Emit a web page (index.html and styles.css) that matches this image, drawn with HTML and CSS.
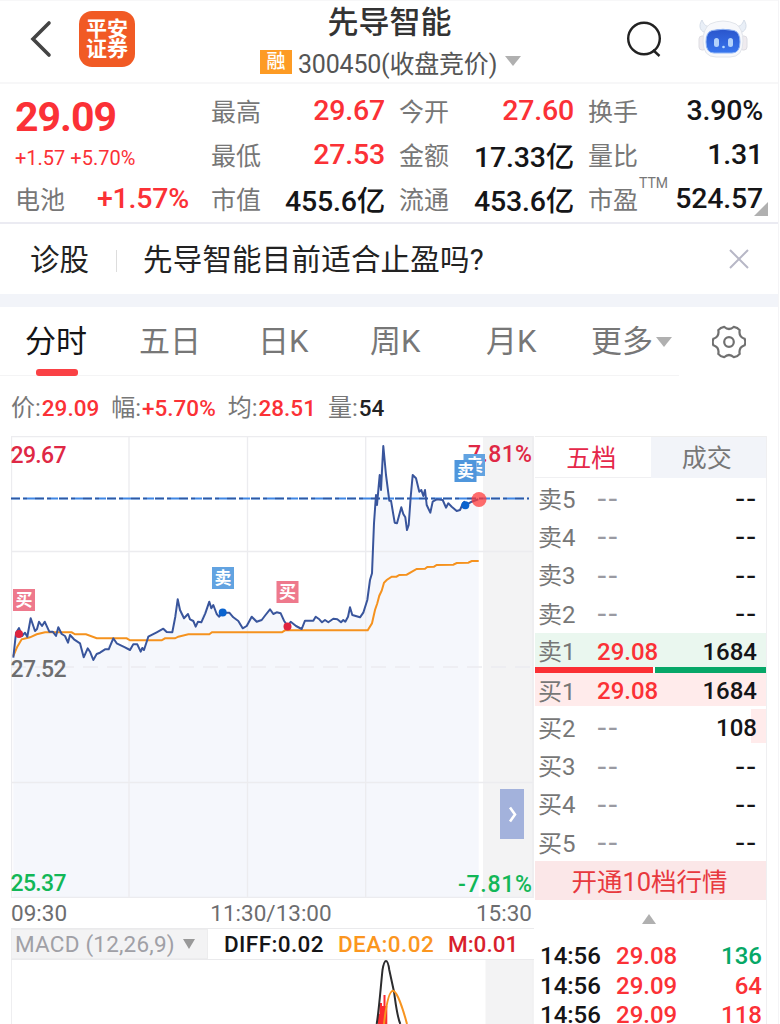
FILE: index.html
```html
<!DOCTYPE html>
<html lang="zh-CN">
<head>
    <meta charset="UTF-8">
    <meta name="viewport" content="width=device-width, initial-scale=1.0">
    <title>先导智能 300450</title>
    <link rel="stylesheet" href="styles.css">
</head>
<body>
    <div id="wrapper">
        <header class="header">
            <svg class="back" viewBox="0 0 22 38" width="22" height="38"><path d="M19 3 L3 19 L19 35"/></svg>
            <div class="logo"><span>平安</span><span>证券</span></div>
            <div class="stock">
                <h1>先导智能</h1>
                <div class="stock-code">
                    <span class="tag">融</span>
                    <span class="code">300450(收盘竞价)</span>
                    <span class="arrow-down"></span>
                </div>
            </div>
            <svg class="search" viewBox="0 0 38 38" width="38" height="38"><circle cx="18" cy="17.500" r="15.800"/><path d="M27 29 L33.500 35"/></svg>
            <svg class="robot" viewBox="0 0 50 42" width="50" height="42">
                <defs>
                    <linearGradient id="face" x1="0" y1="0" x2="0" y2="1">
                        <stop offset="0" stop-color="#2a55cc"/>
                        <stop offset="1" stop-color="#3876ee"/>
                    </linearGradient>
                </defs>
                <path d="M4 2 C0 8 2 14 9 15 L13 8 C8 9 6 7 4 2Z M46 2 C50 8 48 14 41 15 L37 8 C42 9 44 7 46 2Z" fill="#e9eff7" stroke="#d5dde8"/>
                <rect x="1" y="18" width="7" height="14" rx="3" fill="#efebef" stroke="#dddde2"/>
                <rect x="42" y="18" width="7" height="14" rx="3" fill="#efebef" stroke="#dddde2"/>
                <path d="M12 6 Q25 0 38 6 Q45 11 45 23 Q45 39 32 39 H18 Q5 39 5 23 Q5 11 12 6Z" fill="#f7f8fb" stroke="#e2e5eb"/>
                <path d="M14 12.500 Q25 10 36 12.500 Q42 14 42 24 Q42 35 34 35 H16 Q8 35 8 24 Q8 14 14 12.500Z" fill="url(#face)" stroke="#8fb4f5"/>
                <rect x="16" y="20" width="5" height="9" rx="2.500" fill="#b3d2fb"/>
                <rect x="30" y="20" width="5" height="9" rx="2.500" fill="#b3d2fb"/>
                <circle cx="25.500" cy="29" r="1.300" fill="#b8dcff"/>
            </svg>
        </header>

        <section class="quote">
            <div class="quote-main">
                <div class="price">29.09</div>
                <div class="change">+1.57 +5.70%</div>
                <div class="pair"><span>电池</span><b class="red">+1.57%</b></div>
            </div>
            <div class="quote-col">
                <div class="pair"><span>最高</span><b class="red">29.67</b></div>
                <div class="pair"><span>最低</span><b class="red">27.53</b></div>
                <div class="pair"><span>市值</span><b>455.6亿</b></div>
            </div>
            <div class="quote-col">
                <div class="pair"><span>今开</span><b class="red">27.60</b></div>
                <div class="pair"><span>金额</span><b>17.33亿</b></div>
                <div class="pair"><span>流通</span><b>453.6亿</b></div>
            </div>
            <div class="quote-col">
                <div class="pair"><span>换手</span><b>3.90%</b></div>
                <div class="pair"><span>量比</span><b>1.31</b></div>
                <div class="pair"><span>市盈<sup>TTM</sup></span><b>524.57</b></div>
            </div>
            <i class="corner"></i>
        </section>

        <section class="diagnose">
            <span class="diagnose-name">诊股</span>
            <span class="diagnose-text">先导智能目前适合止盈吗?</span>
            <svg viewBox="0 0 20 20" width="20" height="20"><path d="M1 1 L19 19 M19 1 L1 19"/></svg>
        </section>

        <nav class="tabs">
            <span class="tab active">分时</span>
            <span class="tab">五日</span>
            <span class="tab">日K</span>
            <span class="tab">周K</span>
            <span class="tab">月K</span>
            <span class="tab more">更多<i class="arrow-down"></i></span>
            <svg class="gear" viewBox="0 0 34 34" width="34" height="34">
                <path d="M32.600 13.700 Q34 17 32.600 20.300 Q26.400 22.400 27.700 28.900 Q25.500 31.800 21.900 32.200 Q17 27.800 12.100 32.200 Q8.500 31.800 6.300 28.900 Q7.600 22.400 1.400 20.300 Q0 17 1.400 13.700 Q7.600 11.600 6.300 5.100 Q8.500 2.200 12.100 1.800 Q17 6.200 21.900 1.800 Q25.500 2.200 27.700 5.100 Q26.400 11.600 32.600 13.700Z"/>
                <circle cx="17" cy="17" r="4.800"/>
            </svg>
        </nav>

        <div class="info">
            <span>价:<b class="red">29.09</b></span>
            <span>幅:<b class="red">+5.70%</b></span>
            <span>均:<b class="red">28.51</b></span>
            <span>量:<b>54</b></span>
        </div>

        <main class="content">
            <div class="charts">
                <svg class="chart" viewBox="11 436 523 462" width="523" height="462">
                    <rect x="483" y="436" width="51" height="462" fill="#f3f3f4"/>
                    <path class="area" d="M13.300 898 V657.700 L16 633 19 628 22 636 25 632.700 27.300 636.700 30.700 618.300 35 631 37 629 39 621.700 42 626 44.700 621.700 49.300 631.700 56 636 58.300 627.300 61.700 634 68 642.700 70 635 80 643.300 83.700 657.300 87.700 648.300 93.300 660 105 649.300 113.300 638.300 116.700 643.300 130 650 137.300 644.300 140.700 651.700 148.300 636.700 163.300 628.700 172.300 632.300 177.700 599.300 184 618.300 195.700 626.700 209.300 601.700 219 616.700 229.300 612.700 242.700 628.300 251.700 616.700 261.700 620 270 609.300 280.700 613.300 287.700 626 301.700 629 305 620.700 345.300 621.700 350 607.300 352.300 615 360 617.300 367.300 600 372 573.300 376 495 383.300 446 389.300 500.700 397 523.300 401.300 507.300 407 530 412.700 475 419.300 491.700 430.300 512.700 436.700 499.300 456.700 511 478.700 499 V898Z"/>
                    <path class="grid" d="M11 436.700 H533 M11 551.500 H533 M11 782.500 H533 M11 897.300 H533 M11.500 436 V898 M129 436 V898 M247.500 436 V898 M365.700 436 V898 M533 436 V898"/>
                    <path class="grid dash" d="M11 667 H533"/>
                    <path class="now" d="M11 498.500 H529"/>
                    <path class="now-dash" d="M11 498.500 H529"/>
                    <polyline class="avg" points="13.3,656 17.3,646.7 21.7,639.3 30,637.3 36.7,634.3 45,632.3 71.7,632.3 75,634.3 86,634.3 96.7,638.3 126.700,638.3 130,640.3 161.7,640.3 165,638.3 175,638.3 178.3,636.700 188.300,634.3 209.3,634.3 212,632.3 282,632.3 285,630.3 367.7,630.3 372,623.3 375,610 377.3,603.3 379.3,595.7 381.7,590.7 384,582.7 386.7,580 391.7,576.7 396.5,576.7 399.3,575 406.7,574.7 416.7,569 425,568.7 427.3,567 434,566.7 436.7,565 453.3,564.7 456.7,563 468.3,562.7 471.7,561 478.7,561"/>
                    <polyline class="line" points="13.3,657.7 16,633 19,628 22,636 25,632.7 27.3,636.7 30.7,618.3 35,631 37,629 39,621.7 42,626 44.7,621.7 49.3,631.7 52.7,631.7 56,636 58.3,627.3 61.7,634 65,636 68,642.7 70,635 74,639.3 80,643.3 83.7,657.3 87.7,648.3 90,651.7 93.3,660 96.7,654 100,652.7 105,649.3 108.7,649.3 113.3,638.3 116.7,643.3 125,647.3 130,650 133.3,644.3 137.3,644.3 140.7,651.7 142.3,648 144,650 148.3,636.7 156.7,632.3 163.3,628.7 166.7,632 172.3,632.3 175.3,616.7 177.7,599.3 180,610 184,618.3 188,614 190,619.3 193.3,621 195.7,626.7 198,621.7 201.3,622.3 205.3,613.3 209.3,601.7 211.3,608.3 213.3,605 216.7,614 219,616.7 222.7,612.7 229.3,612.7 233.3,617.3 238.3,621 242.7,628.3 246.7,626 251.7,616.7 256.7,621.7 261.7,620 265.5,615 270,609.3 273.3,614 276.7,612.3 280.7,613.3 284,620.7 287.7,626 290.7,621.7 296,626 301.7,629 305,620.7 313.3,620.7 315.7,616.7 319.3,619.3 322,622.3 325,620 328.3,622.3 333.3,618.7 337.3,619.3 341,622.3 343.3,620 345.3,621.7 348,616.7 350,607.3 352.3,615 360,617.3 363.3,612.7 367.3,600 370,580 372,573.3 374,523.3 376,495 377,505 379.7,475 381,490 383.3,446 386,475 389.3,500.7 391,500.7 394.7,522.7 397,523.3 401.3,507.3 403.3,514 405.3,517.3 407,530 408.7,525 410.7,496.7 412.7,475 416,478.3 419.3,491.7 421.3,490 423.3,496 425,490 426.7,505 430.3,512.7 432.7,501.7 436.7,499.3 442.7,500 446,507.7 448.3,503.3 451.7,506.7 456.7,511 460,510 462.7,504 464.3,501.7 465.3,505.3 471.7,501.7 478.3,499.3"/>
                    <g fill="#e0243f"><circle cx="19" cy="634" r="4"/><circle cx="287.500" cy="626.500" r="4"/></g>
                    <g fill="#0a63cf"><circle cx="222.700" cy="612.500" r="4"/><circle cx="465.300" cy="505.300" r="4"/></g>
                    <circle cx="479" cy="499.500" r="7.500" fill="#ff3b3b" opacity=".75"/>
                    <g class="axis">
                        <text x="10.500" y="463" fill="#df2845" textLength="56">29.67</text>
                        <text x="10.500" y="676.500" fill="#6d6d6f" textLength="56">27.52</text>
                        <text x="10.500" y="890.500" fill="#12b757" textLength="56">25.37</text>
                        <text x="468" y="461.500" fill="#df2845" textLength="64">7.81%</text>
                        <text x="458" y="892" fill="#12b757" textLength="74">-7.81%</text>
                    </g>
                    <g class="mark">
                        <rect x="13" y="589" width="22" height="22" fill="#ee798c"/><text x="24" y="606">买</text>
                        <rect x="212" y="567" width="22" height="22" fill="#62a3e1"/><text x="223" y="584">卖</text>
                        <rect x="276.500" y="581" width="22" height="22" fill="#ee798c"/><text x="287.500" y="598">买</text>
                        <rect x="463.500" y="454" width="21.500" height="22" fill="#62a3e1"/><text x="474.500" y="471">卖</text>
                        <rect x="454.500" y="460" width="22" height="22" fill="#4f96dc"/><text x="465.500" y="477">卖</text>
                    </g>
                    <rect x="500" y="789" width="24" height="50" fill="#a3b2dc"/>
                    <path d="M510 807.500 L515 814.500 L510 821.500" fill="none" stroke="#fff" stroke-width="2.600"/>
                </svg>
                <div class="times"><span>09:30</span><span>11:30/13:00</span><span>15:30</span></div>
                <div class="macd-bar">
                    <div class="macd-select">MACD (12,26,9)<i class="arrow-down"></i></div>
                    <span class="diff">DIFF:0.02</span>
                    <span class="dea">DEA:0.02</span>
                    <span class="macd">M:0.01</span>
                </div>
                <svg class="macd-chart" viewBox="11 960 523 64" width="523" height="64">
                    <rect x="485.500" y="960" width="48" height="64" fill="#f3f3f4"/>
                    <path d="M11.500 960 V1024 M533 960 V1024" stroke="#eeeef0"/>
                    <path d="M378 1024 V1014 H379.500 V1003 H382 V1006 H383.500 V995 H385.500 V1006 H387.300 V1024Z" fill="#fb2b30"/>
                    <path d="M376.700 1024 C379 1010 380.700 987 382.500 970 Q384 961 386 961 Q388 961 389.300 970 L394 991.700 C396 1006 397 1016 400.300 1024" fill="none" stroke="#2c2c2e" stroke-width="2"/>
                    <path d="M384 1024 C386 1006 389 991 393 990.700 C397 991 403 1009 407 1024" fill="none" stroke="#f79420" stroke-width="2"/>
                </svg>
            </div>

            <aside class="book">
                <div class="book-tabs"><span class="active">五档</span><span>成交</span></div>
                <div class="row"><span>卖5</span><em>--</em><b class="dash">--</b></div>
                <div class="row"><span>卖4</span><em>--</em><b class="dash">--</b></div>
                <div class="row"><span>卖3</span><em>--</em><b class="dash">--</b></div>
                <div class="row"><span>卖2</span><em>--</em><b class="dash">--</b></div>
                <div class="row first sell"><span>卖1</span><em class="red">29.08</em><b>1684</b></div>
                <div class="ratio"><i></i><i></i></div>
                <div class="row first buy"><span>买1</span><em class="red">29.08</em><b>1684</b></div>
                <div class="row part"><span>买2</span><em>--</em><b>108</b></div>
                <div class="row"><span>买3</span><em>--</em><b class="dash">--</b></div>
                <div class="row"><span>买4</span><em>--</em><b class="dash">--</b></div>
                <div class="row"><span>买5</span><em>--</em><b class="dash">--</b></div>
                <div class="open">开通10档行情</div>
                <div class="up"><i></i></div>
                <div class="tick"><span>14:56</span><span class="red">29.08</span><b class="green">136</b></div>
                <div class="tick"><span>14:56</span><span class="red">29.09</span><b class="red">64</b></div>
                <div class="tick"><span>14:56</span><span class="red">29.09</span><b class="red">118</b></div>
            </aside>
        </main>
    </div>
</body>
</html>
```
FILE: styles.css
```css
*{
    margin: 0;
    padding: 0;
    box-sizing: border-box;
}
body{
    font-family: Roboto, "Noto Sans CJK SC", sans-serif;
    background: #fff;
    color: #151517;
}
#wrapper{
    width: 779px;
    height: 1024px;
    overflow: hidden;
    border-right: 1px solid #f4f4f6;
}
svg{
    display: block;
    flex: none;
}
b{
    font-weight: 500;
}
.red{
    color: #fb3136 !important;
}
.green{
    color: #06a866;
}
.arrow-down{
    display: inline-block;
    border: 8px solid transparent;
    border-top: 10px solid #b0b0b0;
    border-bottom: 0;
}

/* header */
.header{
    height: 84px;
    display: flex;
    align-items: flex-start;
    border-top: 1px solid #f7f7f8;
    border-bottom: 2px solid #f7f7f8;
}
.back{
    margin: 19px 0 0 30px;
    fill: none;
    stroke: #444;
    stroke-width: 3.6;
    stroke-linecap: round;
}
.logo{
    width: 56px;
    height: 56px;
    margin: 10px 0 0 27px;
    padding-top: 8px;
    border-radius: 13px;
    background: #f15a24;
    color: #fff;
    font-size: 21px;
    font-weight: 700;
    line-height: 20px;
    text-align: center;
}
.logo span{
    display: block;
    height: 20px;
}
.stock{
    width: 310px;
    margin-left: 89px;
}
.stock h1{
    width: 290px;
    padding-left: 41px;
    font-size: 31px;
    font-weight: 500;
    line-height: 44px;
    height: 42px;
    text-align: center;
    color: #333;
    white-space: nowrap;
}
.stock-code{
    display: flex;
    align-items: center;
    height: 38px;
    padding-left: 36px;
}
.tag{
    width: 32px;
    height: 24px;
    background: #fd9b24;
    color: #fff;
    font-size: 19px;
    font-weight: 500;
    line-height: 24px;
    text-align: center;
}
.code{
    margin: 0 8px 0 6px;
    font-size: 25px;
    letter-spacing: -.2px;
    color: #555;
    white-space: nowrap;
}
.stock-code .arrow-down{
    margin-top: -2px;
}
.search{
    margin: 20px 0 0 92px;
    fill: none;
    stroke: #222;
    stroke-width: 2.4;
}
.robot{
    margin: 17px 0 0 34px;
}

/* quote */
.quote{
    position: relative;
    height: 140px;
    display: flex;
    border-bottom: 2px solid #ebebf2;
}
.quote-main{
    width: 174px;
    margin-left: 15px;
}
.price{
    height: 60px;
    font-size: 41px;
    font-weight: 700;
    line-height: 66px;
    letter-spacing: -1px;
    color: #fb3136;
}
.change{
    height: 33px;
    font-size: 20px;
    line-height: 28px;
    color: #fb3136;
}
.quote-col{
    width: 175px;
    margin-left: 14px;
    padding-top: 5px;
}
.quote-col:nth-child(2){
    width: 174px;
    margin-left: 22px;
}
.pair{
    height: 44px;
    display: flex;
    justify-content: space-between;
    align-items: center;
    font-size: 25px;
    color: #777;
    white-space: nowrap;
}
.pair span{
    margin-top: -3px;
}
.pair b{
    margin-top: -1px;
    font-size: 28.5px;
    letter-spacing: -.2px;
    color: #151517;
}
.pair sup{
    position: absolute;
    font-size: 14px;
    margin: -4px 0 0 1px;
    line-height: 15px;
}
.corner{
    position: absolute;
    right: 10px;
    bottom: 6px;
    border-left: 14px solid transparent;
    border-bottom: 14px solid #b0b0b0;
}

/* diagnose */
.diagnose{
    height: 83px;
    display: flex;
    align-items: center;
    padding: 0 29px 0 30px;
    border-bottom: 13px solid #f2f4f9;
    font-size: 29.5px;
    color: #222;
}
.diagnose-name{
    width: 86px;
    margin-top: -4px;
    position: relative;
}
.diagnose-name::after{
    content: "";
    position: absolute;
    right: -1px;
    top: 14px;
    width: 1px;
    height: 22px;
    background: #ddd;
}
.diagnose-text{
    flex: 1;
    margin: -4px 0 0 27px;
    letter-spacing: .2px;
}
.diagnose svg{
    stroke: #b7b7c6;
    stroke-width: 2;
}

/* tabs */
.tabs{
    height: 70px;
    display: flex;
    align-items: center;
    padding-left: 25px;
    font-size: 31px;
    color: #777;
    background: linear-gradient(#f4f4f5, #f4f4f5) 0 68px / 679px 1px no-repeat;
}
.tab{
    position: relative;
    top: -4px;
    width: 116px;
    white-space: nowrap;
}
.tab:nth-child(1){ width: 114px; }
.tab:nth-child(2){ width: 119px; }
.tab:nth-child(3){ width: 112px; }
.tab:nth-child(5){ width: 105px; }
.tab.active{
    color: #151517;
}
.tab.active::after{
    content: "";
    position: absolute;
    left: 11px;
    bottom: -15px;
    width: 42px;
    height: 7px;
    border-radius: 3px;
    background: #fa4145;
}
.tab .arrow-down{
    margin: 0 0 5px 3px;
}
.gear{
    margin-left: 5px;
    fill: none;
    stroke: #707070;
    stroke-width: 2.2;
}

/* info */
.info{
    height: 59px;
    display: flex;
    gap: 12px;
    padding: 0 11px;
    line-height: 62px;
    font-size: 24px;
    color: #777;
}
.info b{
    margin-left: 1px;
    font-size: 22.5px;
    color: #222;
}

/* charts */
.content{
    display: flex;
    padding-left: 11px;
    height: 588px;
}
.charts{
    width: 523px;
}
.grid{
    fill: none;
    stroke: #ececef;
    stroke-width: 1.3;
}
.grid.dash{
    stroke-dasharray: 15 9;
}
.area{
    fill: #f5f7fc;
}
.now{
    stroke: #4088e6;
    stroke-width: 1.8;
    stroke-dasharray: 9 3 12 0 9 3 11 1;
}
.now-dash{
    stroke: #32589f;
    stroke-width: 1.6;
    stroke-dasharray: 9 3 4 8;
}
.line{
    fill: none;
    stroke: #39559c;
    stroke-width: 2;
    stroke-linejoin: round;
}
.avg{
    fill: none;
    stroke: #f5921e;
    stroke-width: 2;
}
.axis{
    font-size: 23px;
    font-weight: 500;
}
.mark{
    font-size: 17px;
    font-weight: 700;
    fill: #fff;
    text-anchor: middle;
}
.times{
    height: 30px;
    display: flex;
    justify-content: space-between;
    line-height: 31px;
    font-size: 22.5px;
    color: #6d6d6f;
}
.times span:nth-child(2){
    margin-left: -1px;
}
.times span:last-child{
    margin-right: 2px;
}
.macd-bar{
    height: 32px;
    display: flex;
    align-items: center;
    font-size: 22.5px;
    font-weight: 500;
    line-height: 28px;
    white-space: nowrap;
    border-top: 1px solid #eaeaec;
    border-bottom: 1px solid #eaeaec;
}
.macd-select{
    width: 197px;
    height: 30px;
    padding-left: 3px;
    font-weight: 400;
    letter-spacing: .2px;
    color: #a0a0a6;
    background: #f3f3f4;
    border: 1px solid #ededee;
}
.macd-select .arrow-down{
    border-width: 10px 6px 0;
    border-top-color: #999;
    margin: 0 0 3px 8px;
}
.diff{
    width: 114px;
    margin-left: 16px;
    letter-spacing: .4px;
}
.dea{
    width: 110px;
    letter-spacing: .4px;
    color: #fb961f;
}
.macd{
    color: #d81f2d;
}

/* order book */
.book{
    width: 232px;
    margin-left: 1px;
    border-right: 1px solid #efeff1;
}
.book-tabs{
    height: 44px;
    display: flex;
    font-size: 25px;
    line-height: 44px;
    text-align: center;
    color: #777;
}
.book-tabs span{
    width: 116px;
    height: 42px;
    padding-right: 3px;
    background: #f2f4f9;
    border-top: 1px solid #eee;
}
.book-tabs .active{
    background: #fff;
    color: #e5284a;
    border-bottom: 1px solid #f0f0f2;
}
.row{
    height: 38.3px;
    display: flex;
    align-items: center;
    padding: 0 9px 0 3px;
    color: #777;
}
.row span{
    width: 59px;
    margin-top: -4px;
    font-size: 24px;
    white-space: nowrap;
}
.row em{
    flex: 1;
    font-style: normal;
    font-size: 24px;
    font-weight: 500;
    color: #9a9aa2;
}
.row em:not(.red), .row .dash{
    letter-spacing: 1px;
    transform: scaleX(1.2);
    transform-origin: left;
}
.row .dash{
    transform-origin: right;
}
.row b{
    font-size: 24px;
    color: #151517;
}
.row.first{
    height: 34px;
    padding-top: 3px;
}
.row.sell{
    background: #eaf7ef;
}
.row.buy{
    height: 33px;
    margin-bottom: 3px;
    background: #ffebeb;
}
.row.part{
    background: linear-gradient(#ffebeb, #ffebeb) right 0 / 15px 34px no-repeat;
}
.ratio{
    height: 6px;
    display: flex;
    gap: 2px;
}
.ratio i{
    width: 118px;
    background: #fb2f34;
}
.ratio i:last-child{
    flex: 1;
    background: #07a768;
}
.open{
    height: 39px;
    margin-top: -1px;
    padding-right: 2px;
    background: #fbe7e8;
    color: #e8393e;
    font-size: 25.5px;
    line-height: 42px;
    text-align: center;
}
.up{
    height: 41px;
    padding: 14px 0 0 107px;
}
.up i{
    display: block;
    width: 0;
    border: 7px solid transparent;
    border-bottom: 10px solid #b0b0b0;
    border-top: 0;
}
.tick{
    height: 29.3px;
    display: flex;
    padding: 0 4px 0 5px;
    font-size: 24px;
    font-weight: 500;
    line-height: 30px;
}
.tick span{
    width: 76px;
}
.tick b{
    flex: 1;
    text-align: right;
}
```
